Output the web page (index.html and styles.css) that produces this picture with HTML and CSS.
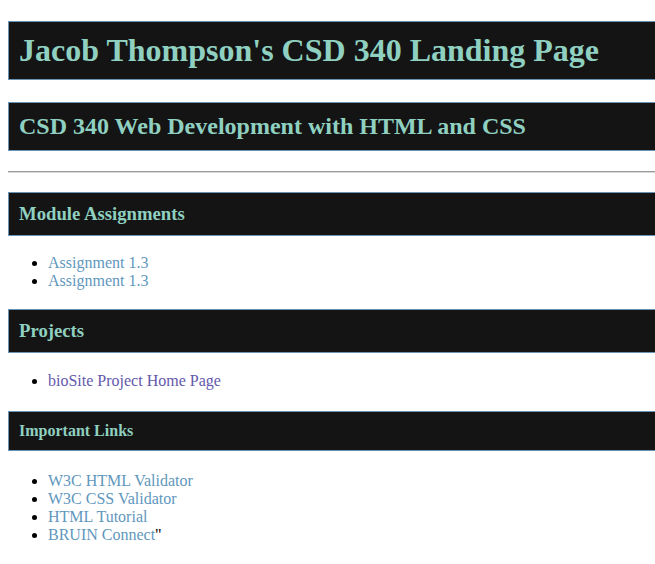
FILE: index.html
```html
<!DOCTYPE html>
<html lang="en">
<head>
<meta charset="utf-8">
<title>Jacob Thompson's CSD 340 Landing Page</title>
<link rel="stylesheet" href="styles.css">
</head>
<body>
<h1 class="bar">Jacob Thompson's CSD 340 Landing Page</h1>
<h2 class="bar">CSD 340 Web Development with HTML and CSS</h2>
<hr class="rule">
<h3 class="bar">Module Assignments</h3>
<ul class="links">
  <li><a class="link" href="#">Assignment 1.3</a></li>
  <li><a class="link" href="#">Assignment 1.3</a></li>
</ul>
<h3 class="bar">Projects</h3>
<ul class="links">
  <li><a class="link visited" href="#">bioSite Project Home Page</a></li>
</ul>
<h4 class="bar">Important Links</h4>
<ul class="links last">
  <li><a class="link" href="#">W3C HTML Validator</a></li>
  <li><a class="link" href="#">W3C CSS Validator</a></li>
  <li><a class="link" href="#">HTML Tutorial</a></li>
  <li><a class="link" href="#">BRUIN Connect</a>"</li>
</ul>
</body>
</html>
```
FILE: styles.css
```css
html {
  overflow: hidden;
}
body {
  margin: 0 0 0 8px;
  font-family: "Liberation Serif", "Times New Roman", serif;
  font-size: 16px;
  color: #000;
  background: #fff;
}
.bar {
  background: #141414;
  color: #8fd0c0;
  border: 1px solid #6b93b3;
  border-right: none;
  padding: 10px;
  font-weight: bold;
}
.rule {
  border: none;
  border-top: 1px solid #9a9a9a;
  border-bottom: 1px solid #d8d8d8;
  height: 0;
}
.links {
  padding-left: 40px;
}
.links.last {
  margin-bottom: 0;
}
.link {
  color: #5f97bd;
  text-decoration: none;
}
.link.visited {
  color: #6358ab;
}
```
